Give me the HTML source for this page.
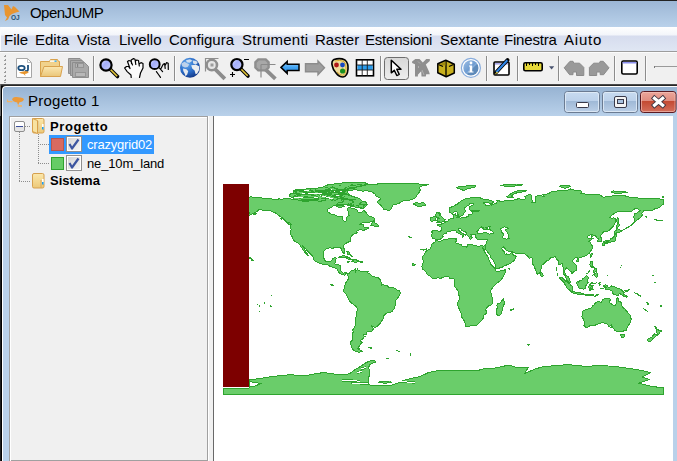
<!DOCTYPE html>
<html><head><meta charset="utf-8">
<style>
*{margin:0;padding:0;box-sizing:border-box}
html,body{width:677px;height:461px;overflow:hidden;background:#f0f0f0;font-family:"Liberation Sans",sans-serif}
.a{position:absolute}
#title{left:0;top:0;width:677px;height:27px;background:linear-gradient(#9bb5d4,#b9d1ea)}
#title .top{left:0;top:0;width:677px;height:1px;background:#232323}
#menubar{left:0;top:27px;width:677px;height:24px;background:linear-gradient(#ffffff 0px,#f3f5fa 8px,#d6dcee 9px,#dfe6f3 23px)}
#menubar span{position:absolute;top:4px;font-size:15px;color:#000;white-space:nowrap;line-height:17px}
#mline{left:0;top:51px;width:677px;height:1px;background:#9c9c9c}
#toolbar{left:0;top:52px;width:677px;height:32px;background:#f0f0f0}
.sep{position:absolute;top:56px;width:2px;height:25px;border-left:1px solid #8c8c8c;border-right:1px solid #fafafa}
#tbline{left:0;top:84px;width:677px;height:1px;background:#4a4a4a}
#frame{left:0;top:86px;width:677px;height:375px;background:#b9d1ea}
.cb{width:16px;height:16px;border:1px solid #8f8f8f;background:linear-gradient(135deg,#d4d4d4,#f6f6f6);box-shadow:inset 0 0 0 1px #fff}
.cb::after{content:"";position:absolute;left:4px;top:2px;width:0;height:0}
</style></head><body>
<div id="title" class="a"><div class="a top"></div>
<span class="a" style="left:30px;top:4px;font-size:15px;line-height:17px;color:#000;letter-spacing:-0.55px">OpenJUMP</span>
</div>
<div id="menubar" class="a">
<span style="left:4px">File</span>
<span style="left:35px">Edita</span>
<span style="left:77px">Vista</span>
<span style="left:119px">Livello</span>
<span style="left:169px">Configura</span>
<span style="left:242px;letter-spacing:0.25px">Strumenti</span>
<span style="left:315px">Raster</span>
<span style="left:365px;letter-spacing:-0.2px">Estensioni</span>
<span style="left:440px">Sextante</span>
<span style="left:504px;letter-spacing:-0.2px">Finestra</span>
<span style="left:564px;letter-spacing:0.8px">Aiuto</span>
</div>
<div id="mline" class="a"></div>
<div id="toolbar" class="a"></div>
<div class="a" style="left:0;top:52px;width:677px;height:1px;background:#fbfbfb"></div>
<div class="a" style="left:0;top:27px;width:1px;height:24px;background:#fafbfd"></div>
<div class="sep" style="left:93px"></div>
<div class="sep" style="left:174px"></div>
<div class="sep" style="left:380px"></div>
<div class="sep" style="left:486px"></div>
<div class="sep" style="left:517px"></div>
<div class="sep" style="left:558px"></div>
<div class="sep" style="left:614px"></div>
<div class="sep" style="left:645px"></div>
<div id="tbline" class="a"></div>
<div class="a" style="left:0;top:84px;width:1px;height:377px;background:#6b6b6b"></div>
<div class="a" style="left:0;top:116px;width:1px;height:345px;background:#1e1e1e"></div>
<div class="a" style="left:1px;top:85px;width:676px;height:376px;background:#000;border-top:1px solid #262626"></div>
<div id="frame" class="a" style="left:2px;top:86px;width:680px;height:380px;background:linear-gradient(#98b4d3 1px,#b9d1ea 29px);border-top:1px solid #fff;border-left:1px solid #fff;border-top-left-radius:4px"></div>
<div class="a" style="left:3px;top:116px;width:674px;height:345px;background:#b9d1ea"></div>
<span class="a" style="left:28px;top:92px;font-size:15px;line-height:17px;color:#000;letter-spacing:0.25px">Progetto 1</span>
<div class="a" style="left:9px;top:116px;width:199px;height:345px;background:#f0f0f0;border:1px solid #a0a0a0"></div>
<div class="a" style="left:10px;top:117px;width:197px;height:350px;border-top:1px solid #fff;border-left:1px solid #fff"></div>
<div class="a" style="left:208px;top:116px;width:5px;height:350px;background:#f0f0f0;border-left:1px solid #fff"></div>
<div class="a" style="left:213px;top:116px;width:1px;height:350px;background:#696969"></div>
<div class="a" style="left:214px;top:116px;width:459px;height:350px;background:#fff"></div>


<!-- MAP -->
<svg class="a" style="left:214px;top:116px" width="459" height="345" viewBox="214 116 459 345">
<g fill="#6acd6a" stroke="#2ea42e" stroke-width="1" stroke-linejoin="round" shape-rendering="crispEdges"><path d="M293.0 200.0L293.0 192.0L300.0 190.0L308.6 188.6L314.8 188.6L326.3 186.4L336.0 184.6L346.7 183.6L355.0 182.8L366.0 182.6L361.0 186.5L354.0 189.8L347.0 190.8L349.0 194.4L360.9 200.4L367.5 204.6L365.0 207.0L362.0 208.5L350.0 206.0L345.0 204.0L330.0 204.0L320.0 202.5L310.0 201.0Z"/><path d="M435.8 240.3L438.1 241.1L440.6 241.2L444.2 239.5L446.7 239.1L450.4 238.9L453.5 239.0L455.5 238.6L456.5 238.9L455.7 239.9L456.5 241.0L455.6 242.2L456.2 243.0L457.1 243.7L458.9 244.0L461.6 244.6L462.0 245.9L464.4 246.5L466.3 247.1L467.5 246.2L467.5 244.8L469.3 244.0L471.2 244.4L473.4 245.1L474.2 245.6L476.1 245.9L479.1 246.2L481.0 245.6L482.6 246.0L484.0 246.1L484.9 245.9L485.8 248.1L485.0 249.9L484.4 250.5L484.2 249.7L482.9 247.6L482.6 248.1L484.0 250.8L485.3 253.0L486.5 254.9L488.1 257.2L488.7 259.9L490.2 262.1L491.0 264.6L492.6 265.8L493.8 267.4L495.2 268.8L496.0 269.6L495.4 270.7L497.5 271.5L499.4 271.1L501.8 270.5L503.6 270.2L505.8 269.7L505.6 271.3L504.9 273.2L503.6 276.2L501.8 278.7L500.0 281.1L497.5 282.6L495.1 284.8L493.2 286.6L492.0 288.5L491.0 290.3L490.8 292.2L491.4 294.0L491.4 296.4L492.6 297.7L492.6 301.3L492.6 303.2L491.4 304.8L488.3 306.0L486.5 308.1L485.6 309.3L486.2 311.1L486.5 313.2L484.6 314.6L483.2 315.8L483.3 317.6L482.7 319.5L481.2 320.7L479.8 322.5L477.7 324.3L476.1 325.4L474.2 325.9L471.8 325.7L469.9 326.1L467.5 326.8L465.7 326.1L465.4 324.9L464.9 322.8L464.1 320.7L463.2 319.1L461.7 317.3L461.3 314.8L460.8 312.1L459.5 309.7L457.7 305.6L457.5 303.6L458.1 301.3L459.5 298.9L459.7 297.1L458.9 295.2L458.1 291.8L457.9 290.3L456.5 288.9L454.6 286.6L454.3 284.8L454.6 283.0L455.0 280.8L454.6 279.3L453.4 278.6L451.6 278.8L449.7 278.2L448.5 276.5L446.7 276.5L444.8 276.7L442.4 277.7L440.6 278.3L438.1 277.8L436.3 278.1L433.8 278.8L432.0 278.1L430.1 276.2L428.3 275.4L427.1 274.0L426.5 272.6L425.0 271.1L424.0 270.1L422.5 268.9L422.1 267.1L421.6 266.2L422.4 265.2L423.0 263.4L423.2 260.9L422.8 259.7L422.2 258.5L423.0 256.0L424.6 254.2L425.2 252.3L426.7 250.5L428.9 249.7L430.8 248.3L431.0 246.8L431.2 245.0L432.6 243.4L434.4 242.7L435.0 241.9L435.8 240.3Z"/><path d="M654.3 219.3L656.1 219.9L661.0 220.5L662.9 221.0L660.4 220.7L654.9 219.8Z"/><path d="M556.6 267.5L556.9 268.9L556.7 270.7L556.2 270.4L556.3 268.5Z"/><path d="M259.9 311.8L260.2 312.0Z"/><path d="M582.2 311.1L582.9 311.1L583.9 310.5L585.7 309.6L587.5 309.1L589.4 308.7L591.2 308.1L592.7 306.4L592.9 305.3L594.3 304.8L594.7 304.0L595.5 302.9L596.7 302.0L598.0 301.2L599.6 301.7L600.3 302.6L601.6 302.5L601.8 301.3L602.6 299.9L603.7 299.1L605.2 298.3L606.3 298.8L607.6 298.9L609.4 298.9L610.6 299.1L610.0 300.5L609.2 301.7L609.0 302.5L610.3 303.3L611.9 304.3L613.3 305.3L614.3 305.8L615.2 305.6L616.3 303.8L616.5 302.0L616.5 300.1L616.8 298.9L617.6 297.3L618.2 298.4L618.5 300.7L619.0 301.7L620.1 301.7L621.1 302.6L621.2 304.2L622.1 306.0L622.3 307.5L623.7 308.1L625.3 309.2L626.1 310.8L627.4 311.6L627.9 312.6L628.8 313.6L629.8 314.6L630.5 315.7L630.5 317.0L631.2 319.1L630.8 321.6L630.2 322.9L629.6 324.0L628.5 325.2L627.9 326.5L627.0 327.7L626.8 329.3L626.6 330.1L624.7 330.5L623.4 331.0L622.2 332.0L621.2 331.4L620.1 331.1L618.8 331.7L617.2 331.2L615.7 330.9L614.3 329.9L613.9 328.9L612.7 327.8L612.2 326.5L611.7 327.2L610.6 327.4L611.2 326.5L611.8 324.6L611.4 325.0L610.1 326.0L609.2 326.8L608.5 326.3L607.9 324.9L607.1 324.4L606.5 323.6L605.3 323.4L603.7 322.8L601.0 323.0L598.6 323.8L596.4 324.3L594.9 325.4L594.3 325.7L592.5 325.9L590.0 325.7L589.4 326.3L587.9 327.1L586.9 327.2L585.8 327.1L584.6 326.2L583.9 326.1L584.0 325.2L584.7 324.9L584.7 323.4L584.2 322.2L583.9 320.9L583.8 319.7L582.9 318.5L582.4 317.3L581.7 316.3L582.3 315.4L582.0 314.3L582.4 313.0Z"/><path d="M325.4 185.6L327.9 184.7L332.8 184.4L337.6 185.3L334.6 186.6L331.5 187.7L329.1 187.4L326.6 186.7Z"/><path d="M408.1 236.8L409.9 236.9L412.1 237.9L409.3 237.2Z"/><path d="M363.4 208.2L359.7 207.6L356.0 207.3L351.7 205.4L348.1 204.8L353.0 202.7L353.6 201.3L349.9 200.3L346.2 198.7L342.6 198.7L338.3 198.4L335.2 197.0L333.4 196.0L335.2 194.2L340.1 193.8L345.0 194.0L349.3 195.3L353.0 196.6L357.2 197.7L360.3 199.1L361.5 200.9L365.8 202.1L367.3 203.0L365.2 204.3L363.4 204.8L364.0 206.4L363.4 208.2Z"/><path d="M346.8 251.4L348.7 251.7L350.5 254.8L352.4 256.6L349.9 255.0L347.4 254.2Z"/><path d="M289.3 196.0L291.1 197.2L294.2 196.9L297.2 196.2L299.1 195.0L300.9 194.2L297.2 193.2L290.5 193.2L289.9 194.8Z"/><path d="M315.6 190.9L320.5 190.5L323.6 191.1L323.6 192.3L319.3 192.3L316.2 191.7Z"/><path d="M576.5 282.4L577.1 284.6L578.0 286.3L578.4 287.6L580.2 288.4L582.6 288.4L583.4 289.2L585.1 288.7L585.7 287.3L585.7 285.8L586.9 284.8L587.3 283.0L588.5 282.6L587.5 281.4L587.3 279.8L588.2 278.7L589.0 277.8L587.3 276.2L586.3 275.6L585.1 276.8L584.2 278.0L582.9 278.7L582.0 279.9L580.2 280.6L579.2 281.3L578.4 282.1L577.3 281.8Z"/><path d="M420.9 249.3L424.0 249.5L426.5 248.8L426.3 249.8L423.4 250.1Z"/><path d="M412.0 263.3L413.6 263.9L415.2 264.4L414.2 265.9L413.0 265.8Z"/><path d="M646.0 216.5L647.2 217.1L646.7 217.3Z"/><path d="M247.0 310.0L247.5 310.3Z"/><path d="M338.9 257.4L340.7 256.1L342.6 255.9L345.0 255.9L347.4 257.0L349.9 258.2L352.1 259.5L348.7 259.8L347.7 259.0L346.5 257.9L343.2 257.0L341.9 257.2L340.1 257.5Z"/><path d="M324.8 190.5L329.1 190.1L334.0 190.5L339.5 190.7L344.4 190.9L344.6 192.7L338.9 192.9L332.8 192.8L329.7 192.3L326.0 191.6Z"/><path d="M332.1 186.8L335.2 188.4L340.1 190.1L345.0 190.7L347.4 189.6L351.1 188.4L354.8 187.7L357.2 186.4L362.1 185.7L365.8 184.6L367.7 183.6L364.6 182.8L357.2 182.5L349.9 182.5L342.6 182.9L335.2 183.8L330.3 184.6L326.6 185.2L324.2 186.2L325.4 187.4L329.1 188.3Z"/><path d="M436.1 240.1L435.3 239.1L433.8 238.6L432.1 238.9L432.2 237.4L431.4 236.7L432.0 234.6L432.2 233.0L431.6 231.5L433.2 230.7L435.6 230.8L438.1 231.0L440.8 231.0L441.4 229.7L441.5 227.8L440.3 226.5L437.6 225.5L437.4 224.7L439.3 224.4L441.0 224.5L441.4 223.3L443.0 223.7L444.8 222.7L446.1 221.6L447.7 221.2L448.5 219.9L449.1 219.2L451.6 218.7L453.5 218.2L453.5 216.2L452.9 214.6L455.2 213.8L456.0 213.5L455.6 215.2L458.2 216.2L456.5 217.9L458.9 217.6L460.8 218.2L463.2 217.4L465.7 217.1L467.4 216.9L468.7 216.5L468.8 215.0L469.3 214.0L471.8 214.4L472.9 213.4L472.4 212.4L471.7 211.7L474.9 211.3L477.3 211.2L479.8 210.8L477.9 210.1L475.5 210.2L471.2 210.8L469.2 209.7L469.1 207.9L469.5 206.8L471.8 205.6L474.0 204.6L473.9 203.8L472.2 203.5L469.9 203.8L469.1 204.8L467.3 206.0L465.7 207.0L464.4 208.0L464.2 209.5L466.0 210.8L465.1 211.9L463.5 213.4L463.2 215.0L462.4 215.5L460.8 216.0L458.9 216.3L458.4 215.2L457.5 213.5L456.8 211.9L455.9 211.3L454.4 211.9L452.8 213.0L451.0 213.0L449.7 212.2L449.1 210.5L449.1 208.9L449.5 207.6L451.6 207.0L453.4 206.3L455.2 205.2L457.7 204.0L459.2 202.5L460.8 201.3L462.0 200.3L463.8 199.7L465.7 198.7L467.5 198.4L469.9 198.1L471.8 197.5L474.2 197.1L477.3 197.2L479.8 197.8L481.2 198.2L483.4 199.1L486.5 199.4L489.6 200.3L492.6 201.1L493.5 202.1L492.4 203.1L490.2 203.3L487.1 202.7L484.4 202.4L483.2 203.0L485.3 204.3L485.6 205.2L487.7 205.9L488.9 205.3L490.2 204.8L492.0 205.1L493.8 204.0L496.7 203.2L497.1 201.5L496.4 200.3L499.4 200.5L500.0 201.5L501.8 201.4L504.2 200.9L507.9 200.3L509.8 200.5L512.2 200.3L514.7 199.8L516.5 199.7L517.7 198.7L521.4 199.2L524.5 199.4L525.7 197.8L524.8 196.6L526.9 195.4L528.1 194.9L531.2 194.9L532.1 195.8L531.2 197.2L531.6 198.4L532.2 200.3L532.4 201.8L531.6 203.0L535.9 202.7L535.6 200.9L535.9 199.1L535.4 197.2L536.7 196.2L537.9 195.5L541.6 195.8L544.1 196.6L542.5 194.4L545.9 194.2L549.0 193.8L549.3 192.6L550.8 192.0L554.5 191.3L558.1 190.9L561.8 190.7L564.3 190.7L567.3 190.1L570.6 189.0L572.9 189.5L574.7 190.4L579.0 190.5L582.0 191.3L581.4 193.5L580.2 193.9L583.9 193.9L588.2 194.3L593.7 194.8L597.4 194.3L600.4 195.0L601.6 196.2L604.1 197.5L605.9 196.6L609.6 196.6L613.9 195.5L617.0 195.1L620.6 195.5L625.5 196.0L629.2 197.2L632.9 197.2L637.8 197.5L639.0 198.8L642.7 198.8L647.6 198.9L651.2 198.3L654.3 198.7L658.6 198.6L661.7 199.3L663.5 199.8L663.5 204.3L661.7 205.1L659.8 207.6L655.5 208.5L652.5 210.1L648.8 210.3L646.4 210.9L643.9 210.8L642.7 212.2L641.5 213.4L642.4 215.0L641.2 216.8L639.0 218.7L637.2 219.9L634.8 221.7L634.1 219.3L633.9 216.2L634.7 213.8L637.2 213.1L639.0 211.3L640.8 210.3L639.0 210.1L637.8 208.5L634.7 208.9L631.6 211.3L628.6 211.7L624.9 211.6L621.2 211.4L618.2 211.7L615.7 212.5L613.3 214.1L610.8 216.2L609.6 217.4L611.4 218.2L613.9 217.8L616.1 219.2L615.1 221.5L614.9 224.2L613.3 226.0L612.0 227.6L610.2 229.3L608.4 230.9L605.9 231.8L603.8 231.8L603.0 232.4L601.9 234.1L600.2 236.2L601.5 238.3L601.6 240.1L601.3 241.1L599.2 241.7L597.8 241.9L598.0 240.1L598.3 238.9L596.9 237.9L596.2 236.8L595.6 235.6L593.4 235.8L591.8 236.5L591.6 235.4L592.7 234.6L591.2 234.2L589.4 235.3L587.5 236.2L587.2 237.0L588.5 238.3L589.4 238.8L591.0 237.9L593.1 238.4L591.5 239.4L590.0 240.6L589.0 241.6L590.2 242.3L591.1 244.4L592.2 245.5L592.2 246.5L592.3 248.3L591.6 249.8L590.2 251.6L589.4 253.2L587.9 254.2L586.1 255.7L583.9 256.4L582.2 256.9L580.2 257.6L578.4 258.2L578.0 259.1L577.4 257.9L575.9 257.6L574.3 258.4L573.5 259.3L572.6 260.9L573.6 262.8L575.1 264.4L576.3 265.5L576.9 267.7L576.8 270.0L575.8 270.7L574.1 271.5L573.5 272.4L571.6 273.7L571.4 272.3L571.7 271.3L570.8 271.2L569.5 270.8L568.7 269.3L567.6 268.6L566.6 268.6L566.1 267.7L565.4 268.3L564.5 271.3L565.1 272.9L566.0 274.9L566.7 275.9L568.1 276.6L569.5 278.3L569.8 280.5L570.6 282.2L569.8 282.6L568.6 281.9L567.1 280.8L566.2 278.7L565.9 277.5L565.7 276.1L564.9 275.3L563.7 274.4L563.4 272.6L563.9 270.5L563.7 268.3L562.8 266.4L562.6 264.0L561.6 263.5L559.7 264.8L558.5 264.2L558.8 262.1L557.9 260.4L556.7 259.2L555.9 257.9L555.5 256.5L553.9 256.9L552.4 257.5L551.0 257.6L549.5 258.6L549.0 259.9L547.1 260.6L545.0 262.4L543.8 263.6L542.5 264.8L541.2 265.7L541.4 267.7L540.9 269.7L540.8 271.6L539.8 272.8L538.9 273.5L537.9 274.3L536.8 273.3L536.2 271.3L535.5 269.5L534.6 267.7L534.0 266.1L533.0 264.6L532.5 262.8L532.2 260.8L532.1 258.5L531.8 257.2L529.4 258.5L527.8 257.1L528.1 256.3L526.9 255.7L525.7 254.9L524.7 253.2L522.6 253.2L519.0 253.3L515.9 253.1L513.4 252.6L512.8 251.1L512.0 250.9L509.8 251.5L507.9 251.1L506.1 250.0L505.2 248.8L504.5 247.4L503.0 246.8L502.4 247.6L501.8 248.3L502.4 249.9L503.6 251.1L504.5 252.3L505.0 253.8L505.7 254.4L506.2 253.2L506.2 254.6L507.9 254.8L509.8 254.4L511.0 253.0L512.0 252.0L512.1 253.8L513.4 255.0L515.0 255.4L516.3 256.6L515.6 258.1L514.7 259.2L513.8 260.9L512.6 261.3L511.6 262.3L510.4 263.4L507.1 264.8L504.2 265.8L502.4 267.1L500.0 267.8L498.4 268.4L496.3 268.6L495.9 267.7L495.4 265.8L495.3 264.2L494.4 262.8L493.5 260.7L492.4 259.3L491.0 257.9L490.4 255.4L489.3 254.4L488.6 253.5L487.7 252.1L486.5 250.4L485.4 249.7L485.8 248.1L485.4 245.9L485.9 244.4L486.6 242.5L487.0 241.0L487.1 239.2L485.9 239.4L484.6 239.9L483.2 240.0L481.0 239.2L479.1 239.9L477.3 239.2L476.4 238.9L476.3 237.4L475.6 237.0L475.8 235.8L475.1 234.8L474.9 234.3L473.9 234.1L472.2 234.2L470.9 234.6L471.7 235.3L470.7 236.1L471.4 236.9L472.4 237.4L471.1 237.8L471.2 238.8L470.6 239.6L469.8 239.1L469.0 238.3L469.1 237.3L468.4 236.4L467.7 235.6L466.8 234.7L466.9 233.1L465.7 232.1L464.4 231.5L462.6 230.9L461.7 230.1L461.0 229.0L459.8 228.2L458.1 228.7L458.3 229.7L459.5 230.8L460.3 232.1L461.6 232.9L462.6 233.5L464.1 234.1L465.7 235.1L464.9 234.8L463.7 234.7L463.2 235.7L463.8 236.4L462.6 237.6L462.2 237.3L462.7 235.8L462.0 235.1L461.4 234.7L460.1 234.2L458.8 233.6L457.7 232.9L456.5 231.9L455.9 230.9L454.6 230.1L452.8 230.4L451.6 230.8L450.4 231.4L448.6 231.0L447.3 231.2L446.8 232.5L446.1 233.4L444.2 234.0L443.0 235.3L442.6 236.1L443.2 236.8L442.3 237.6L442.0 238.1L441.0 238.6L440.4 239.2L437.5 239.2L436.1 240.1Z"/><path d="M367.9 347.0L371.9 347.0L371.3 348.1L368.9 347.9Z"/><path d="M660.2 305.6L661.7 305.4L661.4 306.5L660.4 306.5Z"/><path d="M500.6 185.7L504.2 184.7L510.4 184.2L516.5 184.0L522.6 184.7L519.0 185.8L512.8 186.1L506.7 186.2Z"/><path d="M330.8 284.2L332.8 284.6L333.4 285.4L331.0 285.4Z"/><path d="M353.6 188.4L357.2 186.8L362.1 186.0L367.1 184.7L374.4 184.1L384.2 183.8L394.0 183.3L406.2 183.1L416.1 183.8L428.3 184.6L422.2 186.0L419.1 187.4L420.3 189.9L419.1 192.3L417.3 194.8L416.1 197.2L413.6 198.7L408.7 200.4L403.8 200.7L400.1 202.7L397.1 204.0L393.4 204.8L392.2 206.4L390.9 208.9L389.3 210.8L386.6 209.8L384.2 209.5L382.4 207.6L381.1 205.8L379.3 204.0L377.5 202.4L378.1 200.5L380.5 199.7L379.9 198.1L378.1 197.2L376.2 196.0L375.0 194.2L373.2 192.6L371.3 191.5L367.1 190.9L362.1 191.1L358.5 190.4L355.4 189.6L353.6 188.4Z"/><path d="M620.1 267.5L620.5 267.9L620.3 268.0Z"/><path d="M280.1 218.0L281.7 218.3L281.9 220.1L281.3 219.5Z"/><path d="M576.2 260.6L577.4 259.7L579.0 259.9L578.4 261.4L577.1 261.9Z"/><path d="M599.2 282.0L600.4 282.4L599.8 283.6L600.8 284.8L599.6 285.2L598.9 283.5Z"/><path d="M247.2 257.0L250.1 257.7L252.1 259.3L253.4 260.3L252.0 261.0L251.3 259.0L249.1 258.1Z"/><path d="M351.7 261.7L353.6 259.8L356.0 259.8L359.2 261.4L357.5 261.8L355.4 262.5L353.8 261.9Z"/><path d="M614.5 233.4L616.0 233.0L617.6 232.4L618.8 232.8L621.4 231.2L620.0 230.2L617.6 228.7L616.6 228.7L616.3 230.7L614.9 231.2L614.4 232.3Z"/><path d="M614.5 234.6L616.3 233.7L616.8 235.8L615.7 237.3L615.6 239.0L615.4 240.5L614.3 241.3L613.0 241.7L611.1 241.8L609.8 242.8L608.6 242.7L608.9 241.8L607.4 241.7L605.4 242.3L603.5 242.7L603.4 242.1L605.4 240.7L607.8 240.6L609.6 240.2L610.6 238.9L611.2 239.1L612.8 237.9L614.0 236.7L614.5 235.4Z"/><path d="M413.6 204.0L415.4 202.9L420.3 203.1L423.4 202.7L425.2 204.0L426.1 204.8L424.6 205.4L420.3 206.5L417.3 206.0L415.2 205.9L416.1 205.1Z"/><path d="M435.6 220.3L435.5 218.7L436.3 217.4L435.0 216.6L433.8 216.5L432.6 217.3L430.8 217.8L431.0 219.0L430.3 220.4L431.0 221.1L433.2 221.0L434.4 220.4Z"/><path d="M347.1 261.8L349.5 261.9L348.8 262.4L347.7 262.1Z"/><path d="M571.9 292.5L572.9 291.6L574.7 291.6L576.0 292.4L578.4 292.7L579.6 292.3L580.9 292.7L581.2 293.5L583.1 293.6L583.3 294.9L580.8 294.5L578.4 294.2L575.9 293.8L573.5 293.3L572.2 292.8Z"/><path d="M527.3 344.0L529.4 344.2L528.5 345.1L527.3 344.8Z"/><path d="M654.7 282.0L655.3 282.6L654.8 282.7Z"/><path d="M253.4 214.0L256.4 213.6L255.0 214.6Z"/><path d="M621.2 230.8L623.7 229.6L626.8 227.8L629.8 226.0L632.3 224.2L634.7 222.0L634.3 222.6L631.6 224.9L628.6 226.9L625.5 228.8L622.5 230.4Z"/><path d="M602.0 243.4L603.4 242.7L604.6 243.5L604.0 245.7L602.9 246.2L602.4 244.6Z"/><path d="M590.6 261.5L592.7 261.5L592.8 263.4L592.0 264.8L593.1 266.8L594.9 268.3L593.9 268.0L592.0 267.2L590.7 266.6L590.1 265.2L589.8 264.2L590.5 263.4Z"/><path d="M503.4 298.9L504.5 302.0L504.9 303.2L504.0 304.4L503.4 306.2L502.4 309.3L501.6 312.1L500.7 314.7L498.5 315.6L496.9 314.6L496.2 311.8L496.7 309.7L497.3 307.5L496.9 305.0L497.5 304.0L499.7 303.4L501.2 301.7L501.8 300.7L502.8 299.3Z"/><path d="M621.5 265.6L621.6 265.8L621.4 265.8Z"/><path d="M270.9 294.9L271.9 295.2L271.3 295.6Z"/><path d="M652.5 275.4L653.1 275.6L652.6 275.7Z"/><path d="M510.6 309.9L511.4 309.9L513.7 308.7L513.4 309.3L511.0 310.3Z"/><path d="M299.1 191.3L302.7 192.0L307.0 192.0L313.1 192.1L313.8 191.3L312.5 190.5L308.2 190.4L304.6 190.7L300.3 190.6Z"/><path d="M607.8 275.0L608.0 275.4L607.6 275.3Z"/><path d="M592.5 275.6L593.7 274.0L595.5 273.7L596.7 272.4L598.0 274.4L597.6 276.2L596.6 277.2L595.1 276.5L594.5 274.9L593.2 274.9Z"/><path d="M242.7 217.1L248.2 215.8L251.9 214.0L255.0 212.4L257.0 211.7L259.2 209.5L262.3 210.1L266.6 210.7L270.3 210.9L273.9 212.2L276.4 213.4L278.9 215.6L281.9 217.4L283.8 219.3L286.2 221.7L289.3 223.6L290.5 225.2L291.1 229.1L290.5 232.1L290.9 234.6L292.3 237.0L292.9 238.5L294.2 240.7L295.3 241.9L297.8 242.5L299.4 244.3L300.9 246.8L302.7 249.3L304.0 251.1L305.8 253.8L308.2 256.1L307.6 254.2L305.8 251.7L304.6 248.9L302.4 245.6L304.8 247.4L307.0 250.5L309.5 253.0L312.5 256.0L314.0 258.5L313.8 259.9L316.2 261.8L319.3 263.0L322.3 264.2L325.4 265.0L327.2 264.4L329.7 266.1L332.8 267.4L335.8 268.3L337.6 269.7L338.0 271.3L338.5 272.2L340.7 273.9L343.2 274.8L344.8 275.3L345.6 273.4L347.2 274.0L348.2 275.0L348.3 273.7L347.7 273.3L345.6 272.4L343.2 273.4L341.0 271.3L340.6 268.9L341.0 265.8L338.3 264.7L335.2 264.8L334.8 263.4L335.6 260.9L336.4 258.0L334.6 257.9L332.4 258.5L332.0 260.3L330.5 261.5L327.9 261.9L325.6 261.2L324.4 259.7L323.6 257.2L323.3 254.2L323.8 251.1L325.4 249.3L327.2 248.1L330.3 247.9L332.8 248.4L333.7 248.3L334.0 247.0L337.0 247.0L338.9 247.8L340.1 247.4L341.3 248.7L341.8 250.5L342.8 252.3L343.8 253.3L344.6 253.0L345.0 251.4L344.4 249.3L343.5 247.4L343.4 245.9L344.8 244.4L346.8 242.8L348.9 241.8L350.4 241.0L349.9 238.9L350.8 237.3L351.7 235.8L352.6 234.5L355.4 233.6L357.2 233.0L356.5 231.5L358.5 230.3L360.9 229.4L362.8 230.8L365.2 229.7L368.3 228.7L368.9 227.1L365.8 227.8L364.0 226.9L363.9 224.8L361.5 224.1L359.1 224.4L360.3 223.6L363.4 222.7L368.3 222.7L371.9 221.5L373.8 220.3L374.4 218.5L372.4 217.1L369.5 216.2L367.7 214.6L366.4 213.1L364.6 211.3L363.6 210.3L362.1 212.2L359.7 212.5L357.9 211.9L357.2 210.1L355.4 209.2L353.0 208.2L348.1 207.6L347.4 208.9L348.1 211.3L348.3 213.8L349.2 215.2L346.2 217.4L346.5 219.9L345.6 221.4L344.0 221.1L342.2 219.4L342.2 216.6L338.3 216.5L334.6 215.0L330.9 214.1L329.1 212.5L327.1 211.3L327.2 209.7L328.5 208.5L331.5 207.3L332.8 206.0L335.8 205.2L337.0 204.0L338.3 202.7L340.1 202.7L341.7 203.0L343.2 201.5L343.2 199.9L340.7 198.8L337.6 198.9L335.2 200.3L333.0 199.7L331.5 200.5L329.7 198.9L327.9 198.6L327.1 196.2L325.4 196.7L324.8 198.3L325.6 200.3L323.6 200.5L321.1 201.1L318.1 201.1L315.6 200.5L311.9 199.9L309.5 200.9L305.8 201.3L302.1 201.1L299.7 200.5L296.0 199.3L292.3 199.2L289.9 198.8L286.8 198.1L284.4 198.7L281.9 199.2L278.9 198.9L275.8 199.8L272.7 199.1L270.3 198.8L266.6 198.3L262.9 198.1L259.2 197.8L256.2 197.2L253.7 197.1L250.9 196.9L248.2 197.5L245.2 198.1L243.3 198.4L241.5 199.3L239.4 199.8L241.5 201.1L243.3 202.0L241.7 202.7L239.0 203.1L237.2 203.8L239.0 205.1L241.5 205.2L245.2 205.2L246.0 206.2L243.9 206.4L241.1 207.3L240.3 208.9L241.5 210.1L243.9 210.9L244.8 212.3L248.8 212.2L250.1 213.1L248.8 214.4L245.8 215.6L242.7 217.1Z"/><path d="M624.7 290.9L626.1 291.8L628.6 290.9L629.4 289.5L628.0 290.3L626.5 290.9Z"/><path d="M643.8 308.7L645.7 309.9L647.6 311.5L647.0 311.1L644.3 309.3Z"/><path d="M370.4 225.9L371.3 224.2L372.6 222.3L374.4 221.0L375.0 221.4L374.4 222.9L376.2 223.4L377.8 224.8L378.4 226.0L377.8 227.0L376.6 226.7L375.0 226.6L373.8 225.9L371.9 225.9Z"/><path d="M603.5 285.8L605.3 284.7L607.1 285.3L609.0 288.2L611.4 286.0L613.0 286.4L615.7 287.4L618.2 288.4L620.0 288.9L621.6 290.2L623.7 291.8L624.1 292.8L623.0 293.3L624.3 294.6L625.9 295.6L627.9 296.8L626.5 297.2L624.3 296.7L622.1 295.0L619.9 293.5L618.8 294.4L618.2 295.5L616.3 295.3L614.7 294.2L613.3 294.1L612.7 293.1L612.3 291.4L610.8 290.3L608.7 289.6L606.5 289.1L605.7 289.2L604.7 287.8L606.5 287.3L605.1 286.6L603.8 286.2Z"/><path d="M610.8 192.1L613.3 190.9L616.3 191.3L621.9 191.7L627.4 192.1L623.1 192.8L617.0 193.8L613.3 192.9Z"/><path d="M557.5 273.2L558.0 275.4L557.7 275.5L557.3 273.8Z"/><path d="M234.7 307.5L235.1 307.7Z"/><path d="M506.7 196.9L508.5 195.4L510.4 194.2L512.2 192.9L514.7 191.7L518.3 190.7L522.6 190.5L526.9 190.0L524.5 191.7L519.0 192.3L514.7 193.5L512.8 194.8L511.6 196.0L513.4 197.5L510.4 197.8L507.9 197.5Z"/><path d="M654.6 326.3L655.9 327.3L656.9 328.7L658.0 329.5L658.5 330.1L659.8 330.6L661.7 330.4L661.4 331.5L660.1 332.1L659.7 332.8L658.8 334.1L657.7 335.2L657.1 334.8L657.4 333.3L656.4 332.7L655.9 332.2L656.9 331.4L657.0 329.9L656.4 328.9L655.0 327.3Z"/><path d="M654.6 333.8L655.5 334.3L656.5 334.8L656.1 335.9L655.2 336.9L654.7 337.7L652.8 338.5L652.2 339.9L651.0 341.0L649.4 341.3L647.1 340.7L647.3 339.7L648.6 338.5L649.8 338.0L651.9 336.9L652.8 335.6L653.7 334.9Z"/><path d="M259.5 305.6L260.2 306.0L259.7 306.1Z"/><path d="M586.6 273.9L588.2 272.6L589.5 270.5L589.0 271.7L587.3 273.7Z"/><path d="M293.5 190.5L296.0 190.9L299.7 189.9L301.5 189.3L299.7 189.4L294.8 190.0Z"/><path d="M318.7 194.8L321.1 196.2L322.9 196.7L324.4 196.0L324.8 194.8L322.9 193.5L320.5 193.8L317.4 194.4Z"/><path d="M360.7 261.7L362.6 261.8L362.4 262.1L360.8 262.1Z"/><path d="M617.6 217.7L618.5 219.3L618.2 221.7L618.8 223.8L620.0 224.4L618.4 226.6L617.6 227.8L616.8 227.2L617.0 225.4L617.1 222.9L616.6 220.5L617.2 218.7Z"/><path d="M348.2 273.5L349.3 273.7L349.9 272.6L350.5 271.3L351.4 270.6L353.0 270.4L354.4 269.6L355.4 269.0L355.8 269.7L355.0 270.7L355.3 271.6L355.9 272.2L355.7 271.0L357.0 270.1L357.5 269.0L358.2 270.1L359.3 270.8L360.9 271.2L362.8 271.7L364.2 271.3L365.8 271.1L367.3 271.1L366.2 271.8L367.7 272.2L368.6 273.7L369.7 274.0L371.0 275.0L371.6 275.9L372.8 276.8L374.6 277.0L376.9 277.2L378.3 277.7L379.8 279.1L380.5 280.3L381.0 281.9L381.8 283.0L382.0 284.2L381.3 285.2L383.6 284.8L384.8 285.1L386.6 285.4L388.1 286.4L388.7 287.3L390.9 287.6L392.8 287.8L394.6 288.1L395.8 288.7L397.3 290.0L398.9 290.4L399.9 290.9L400.2 292.8L399.9 295.2L399.1 296.2L397.7 297.7L396.7 299.5L395.3 300.4L395.2 302.3L395.2 305.6L394.5 306.7L394.2 308.5L393.0 310.2L391.9 311.5L390.3 312.3L388.4 312.5L386.0 313.6L384.4 314.8L383.5 316.4L383.5 318.5L382.4 319.7L381.4 321.6L380.3 323.2L378.7 325.0L377.5 326.1L375.9 327.0L374.2 327.0L372.6 326.3L371.5 325.7L371.3 326.6L372.9 327.7L373.2 329.2L372.3 330.8L370.1 331.6L367.1 331.9L366.7 333.0L366.8 334.1L365.2 334.7L363.4 334.4L363.4 335.6L364.6 336.1L365.1 336.6L364.0 336.9L363.0 338.8L361.8 339.3L360.3 340.9L361.5 342.1L362.4 342.8L360.3 344.2L359.5 345.7L358.5 347.0L359.2 348.3L357.9 348.6L359.0 349.5L360.3 350.4L363.0 351.3L361.5 351.7L359.1 352.2L357.2 351.9L354.8 351.0L352.4 349.1L351.7 346.7L350.5 344.2L350.8 341.8L352.1 340.3L353.0 338.7L352.6 337.1L353.0 335.6L352.6 333.8L353.2 332.0L352.8 329.9L354.2 327.7L355.2 325.2L355.4 322.8L355.5 320.3L355.8 317.9L356.5 315.4L356.8 313.0L357.1 310.4L357.0 308.1L356.5 306.6L354.8 305.4L352.4 303.6L349.9 301.6L349.3 300.4L348.1 298.5L346.8 295.8L345.6 293.4L344.4 292.2L343.4 290.9L343.8 289.5L344.8 288.5L344.0 287.3L344.0 286.0L345.0 284.8L345.0 283.2L346.2 282.2L346.8 281.1L347.9 279.9L348.2 278.7L348.1 276.6L347.6 275.4Z"/><path d="M231.7 300.7L232.9 301.3L231.7 301.2Z"/><path d="M599.8 288.1L602.9 288.1L603.2 288.9L600.4 288.6Z"/><path d="M559.4 186.4L563.0 185.0L566.7 185.0L571.0 186.4L565.5 188.3L561.8 187.4Z"/><path d="M396.4 350.4L399.1 351.3L398.3 351.0Z"/><path d="M605.3 243.7L606.3 242.3L608.0 242.3L607.5 243.4L605.9 244.0Z"/><path d="M257.0 304.4L258.0 304.8L257.4 305.0Z"/><path d="M508.3 268.6L509.8 268.6L509.4 269.1L508.5 269.0Z"/><path d="M634.7 292.8L637.2 293.8L639.0 295.8L640.8 296.2L638.4 294.4L635.9 293.4Z"/><path d="M326.0 193.5L329.1 193.4L332.1 193.9L330.9 195.1L329.1 195.9L327.2 195.4Z"/><path d="M386.0 358.3L388.5 358.7L387.3 358.4Z"/><path d="M337.0 205.4L340.1 205.2L343.2 205.8L344.4 206.4L341.3 207.3L338.3 207.0L336.4 206.0Z"/><path d="M540.8 272.2L541.6 272.6L542.6 273.8L543.2 275.6L542.6 276.6L541.4 276.8L540.8 275.0Z"/><path d="M410.3 353.4L410.8 355.7L410.5 354.6Z"/><path d="M589.4 290.9L589.3 288.5L588.5 287.6L589.0 285.9L589.8 284.2L590.4 283.1L591.8 282.9L593.7 283.1L595.3 283.6L596.4 282.4L595.5 283.8L594.0 284.0L592.3 283.7L590.6 283.6L590.1 284.8L591.0 285.8L592.0 285.4L593.9 285.3L593.2 286.0L591.8 286.6L592.8 287.9L593.3 289.8L592.2 290.0L591.2 288.6L590.6 287.6L590.5 290.9Z"/><path d="M559.7 277.3L562.4 277.8L563.7 279.3L565.5 281.1L566.7 282.0L568.6 283.0L570.0 284.2L571.0 285.4L572.6 286.6L572.9 288.1L572.6 291.3L571.1 291.4L569.8 290.3L568.3 289.1L566.7 287.4L565.9 285.7L564.9 284.2L563.9 282.2L562.4 281.1L561.2 279.8L560.0 278.6Z"/><path d="M584.1 294.1L585.7 294.2L588.8 294.4L591.2 294.5L593.7 294.4L593.4 295.1L591.2 295.1L588.8 295.0L586.3 295.2L584.5 295.0Z"/><path d="M456.5 187.7L459.5 186.2L463.8 186.3L469.9 185.6L476.1 186.0L474.9 187.1L469.9 188.3L466.3 189.3L463.8 190.4L460.8 189.5L458.9 188.6Z"/><path d="M590.2 256.5L590.1 255.3L591.2 253.5L592.3 253.6L591.8 255.4L591.0 257.4Z"/><path d="M620.3 334.1L622.5 334.5L624.7 334.3L624.5 335.9L624.2 337.0L623.0 337.6L621.9 337.5L621.0 336.1Z"/><path d="M594.3 296.8L595.5 295.5L597.4 294.6L598.9 294.5L596.7 295.6L595.1 296.7Z"/><path d="M228.3 310.0L228.6 310.3Z"/><path d="M367.2 271.0L368.4 271.0L368.3 271.8L367.2 271.8Z"/><path d="M264.1 302.3L265.1 302.9L264.4 303.2Z"/><path d="M270.3 305.6L271.3 306.2L270.5 306.5Z"/><path d="M436.0 222.8L438.7 222.6L441.8 222.0L444.7 221.4L445.1 219.6L443.4 218.8L442.8 217.7L441.2 216.5L440.6 215.6L439.3 215.2L440.8 213.8L438.7 213.5L439.1 212.4L436.9 212.4L436.3 213.8L435.6 215.0L436.3 216.2L437.1 217.1L438.7 217.4L439.3 218.3L439.1 218.9L437.4 218.9L438.1 219.9L436.6 220.7L438.1 221.0L439.3 221.2L437.7 221.5Z"/><path d="M285.8 222.0L289.3 222.6L291.7 224.8L289.3 224.4L286.8 222.9Z"/><path d="M647.0 302.6L647.9 303.2L649.2 305.0L647.9 304.2Z"/><path d="M297.2 196.6L298.7 197.8L299.7 198.7L303.4 199.6L308.2 199.9L313.1 199.9L318.4 199.3L318.7 198.1L317.4 196.6L315.0 195.4L313.1 194.5L309.5 194.8L304.6 194.5L302.7 194.4L299.1 195.4Z"/><path d="M593.1 271.3L593.7 270.1L595.1 268.9L596.7 268.9L597.0 270.7L595.5 271.9L593.9 272.8L592.9 272.2Z"/><path d="M661.7 197.0L663.5 196.5L663.5 197.3Z"/><path d="M223.0 388.0L249.0 388.0L249.0 380.0L259.8 378.5L271.6 376.5L281.9 375.5L289.3 374.8L307.0 375.5L317.4 373.3L324.8 372.6L333.6 374.0L345.0 374.8L350.0 373.5L353.0 371.0L357.0 368.5L361.0 366.0L366.0 362.6L370.0 361.0L374.0 360.0L376.0 361.8L372.0 363.5L369.5 365.0L368.5 368.0L370.0 371.5L369.5 375.0L368.5 378.0L369.0 384.5L372.0 386.0L380.0 385.8L392.5 385.0L399.0 382.5L404.5 380.2L415.0 377.5L420.0 376.6L428.6 372.5L440.0 370.3L452.7 370.1L479.3 370.1L484.6 368.4L493.5 368.4L505.9 365.7L511.2 365.7L514.8 367.0L528.1 367.5L524.5 373.7L534.3 369.3L543.2 366.6L555.0 365.7L567.7 364.6L585.5 366.3L603.2 365.5L620.9 367.2L638.7 369.9L651.0 372.6L642.2 377.0L649.3 379.6L638.7 383.2L652.8 386.7L663.5 387.6L663.5 394.5L223.0 394.5Z"/></g>
<path d="M500.6 229.1L501.2 228.3L503.0 227.2L504.9 226.9L507.3 227.5L508.2 228.7L505.8 229.6L505.5 230.9L507.4 232.1L507.7 233.7L508.2 234.6L509.1 235.8L508.5 237.0L509.1 238.5L506.7 239.2L504.2 238.4L503.0 237.9L502.8 236.7L503.6 234.8L503.6 234.0L502.4 232.9L501.2 231.5L501.2 230.1ZM477.5 233.4L477.3 232.8L476.9 231.8L477.9 230.9L478.2 229.7L479.4 228.8L480.4 227.6L481.6 227.0L482.8 227.6L484.0 228.0L482.8 228.7L484.0 229.7L485.9 229.3L487.7 228.7L486.2 228.5L485.9 227.6L487.7 227.0L489.8 226.5L491.0 226.3L489.8 227.2L489.3 227.8L489.6 228.7L488.3 229.3L490.2 229.9L491.8 230.9L493.0 232.1L494.0 233.2L493.2 233.9L491.4 233.9L489.6 234.1L488.1 233.6L486.2 232.8L484.6 232.9L482.8 233.0L481.2 233.9L479.8 233.7L478.5 233.9ZM249.5 381.8L255 382.3L260.5 383.6L256 385.8L249.5 386.8Z" fill="#fff" stroke="#2ea42e" stroke-width="1" shape-rendering="crispEdges"/>
<path d="M294 197.5L300 197L308 197.8L318 197.6M302 193.8L312 193.2L322 193.6M320 195.5L326 197L333 199M333 191.5L340 191.2L346 192M326 190L332 189.5M304 191L310 190.5M336 195.5L342 196.5" fill="none" stroke="#fff" stroke-width="1" shape-rendering="crispEdges"/>
<path d="M310.6 196.2L314.1 195.3L316.2 195.6M334.7 196.4L336.6 196.6L339.7 196.3L342.6 195.3L344.2 194.6M342.7 193.3L345.3 194.3L347.3 193.8M302.7 190.8L304.9 191.9L306.7 191.7M348.3 186.6L350.8 187.8L352.5 187.9L354.4 188.3M317.8 191.4L320.8 191.3L324.4 192.4L327.1 192.8M337.6 194.8L341.0 194.0L343.1 193.7M356.6 184.9L359.1 184.4L361.0 184.2L361.8 184.4M336.0 189.3L337.9 189.4L340.9 189.0M321.8 194.6L323.4 193.5L325.4 192.7L327.8 191.6M320.5 198.2L323.5 198.2L325.3 198.1L329.2 198.1M338.7 185.6L339.4 185.8L341.1 185.3M332.5 195.1L334.6 195.8L338.6 196.7L342.1 197.4L345.4 196.8M330.8 191.5L334.8 192.2L337.4 191.5M337.2 191.3L341.1 192.4L343.6 191.7L345.6 191.0L345.8 191.0M358.7 203.2L362.4 202.8M344.9 187.8L347.5 188.1L349.2 189.2M345.7 194.1L347.6 194.4M355.8 206.0L357.2 205.7L360.0 204.6L363.5 205.1L364.8 205.5M310.6 197.1L313.4 197.9L315.1 198.5L318.8 198.8M303.3 197.9L306.2 197.4L309.0 197.6M350.3 185.5L351.9 184.8L352.9 184.2M308.5 190.3L310.6 189.8M315.1 189.8L315.6 189.8M304.8 193.4L307.3 193.2L309.7 192.2L312.1 191.8L314.7 192.3M321.1 195.4L323.8 194.4L327.8 195.1L331.7 194.1M351.5 185.0L353.2 185.9L355.8 185.5M357.9 206.3L358.7 206.6M322.5 191.3L326.1 190.2L329.2 191.1M325.5 189.3L329.5 189.4L331.6 190.5L333.9 190.2M295.4 192.6L297.4 193.2L299.1 194.0M303.5 197.1L305.1 196.6L307.1 196.8L310.0 197.4M341.0 200.2L343.5 199.8L347.4 198.9L350.7 199.3L352.4 200.1M351.3 200.1L354.4 199.1L356.0 199.4L356.2 199.4M294.4 195.8L297.1 194.6L300.6 195.2M329.7 195.8L332.5 196.4L335.2 197.2L338.8 196.5L342.2 195.9M340.4 194.0L342.1 195.0L344.4 193.9L347.0 193.3M336.8 191.0L340.1 190.5L343.1 189.3L344.7 188.8L347.9 189.2M342.3 190.0L344.5 189.9L345.9 190.4M319.7 194.9L322.1 194.1L326.0 194.6L328.5 195.1M323.4 192.0L327.0 190.8L330.4 191.6M348.2 203.5L349.9 204.3L351.6 205.1M352.4 205.3L354.3 204.8M330.3 187.6L333.8 187.4L335.3 188.0L337.8 188.9M333.5 187.9L335.1 188.4L337.7 189.0M340.0 189.9L343.8 190.0L345.8 189.8" fill="none" stroke="#2ea42e" stroke-width="1" shape-rendering="crispEdges"/>
<path d="M342 380.5L350 380.6L360 381.2M351 383L360 383.2L368 383.6M399 381.8L407 382L415 382.3M357 372.5L362 371.5M361 369L366 367.5" fill="none" stroke="#2ea42e" stroke-width="2.6" shape-rendering="crispEdges"/>
<path d="M342 380.5L350 380.6L360 381.2M351 383L360 383.2L368 383.6M399 381.8L407 382L415 382.3M357 372.5L362 371.5M361 369L366 367.5" fill="none" stroke="#fff" stroke-width="1" shape-rendering="crispEdges"/>
<path d="M378 382.3L383 381.2L390 381L391.5 382.5L385 383.3Z" fill="#6acd6a" stroke="#2ea42e" stroke-width="1" shape-rendering="crispEdges"/>
<rect x="223" y="184" width="26" height="203" fill="#7d0000"/>
</svg>
<!-- /MAP -->
<!-- toolbar icons -->
<svg class="a" style="left:0;top:0" width="677" height="86">
<defs>
<linearGradient id="lens" x1="0" y1="0" x2="1" y2="1"><stop offset="0" stop-color="#e8ecff"/><stop offset="0.4" stop-color="#a4aefc"/><stop offset="1" stop-color="#c8cff8"/></linearGradient>
<linearGradient id="fold" x1="0" y1="0" x2="0" y2="1"><stop offset="0" stop-color="#fbe7b0"/><stop offset="1" stop-color="#eac679"/></linearGradient>
<radialGradient id="globe" cx="0.35" cy="0.3" r="0.85"><stop offset="0" stop-color="#6aaef0"/><stop offset="0.5" stop-color="#2a6cc8"/><stop offset="1" stop-color="#0a2470"/></radialGradient>
<linearGradient id="blarr" x1="0" y1="0" x2="0" y2="1"><stop offset="0" stop-color="#9ad2ff"/><stop offset="0.5" stop-color="#42a4f2"/><stop offset="1" stop-color="#2c88dc"/></linearGradient>
<linearGradient id="info" x1="0" y1="0" x2="1" y2="1"><stop offset="0" stop-color="#9cbde4"/><stop offset="0.5" stop-color="#6d9bd0"/><stop offset="0.52" stop-color="#8fb4e0"/><stop offset="0.6" stop-color="#5f8cbc"/><stop offset="1" stop-color="#5b87b5"/></linearGradient>
<linearGradient id="press" x1="0" y1="0" x2="0" y2="1"><stop offset="0" stop-color="#d8d8d8"/><stop offset="1" stop-color="#eeeeee"/></linearGradient>
</defs>
<!-- grip -->
<g fill="#9a9a9a"><rect x="5" y="55" width="1" height="1"/><rect x="4" y="56" width="2" height="1"/><rect x="5" y="59" width="1" height="1"/><rect x="4" y="60" width="2" height="1"/><rect x="5" y="63" width="1" height="1"/><rect x="4" y="64" width="2" height="1"/><rect x="5" y="67" width="1" height="1"/><rect x="4" y="68" width="2" height="1"/><rect x="5" y="71" width="1" height="1"/><rect x="4" y="72" width="2" height="1"/><rect x="5" y="75" width="1" height="1"/><rect x="4" y="76" width="2" height="1"/><rect x="5" y="79" width="1" height="1"/><rect x="4" y="80" width="2" height="1"/><rect x="4" y="82" width="2" height="1"/></g>
<!-- 1 doc -->
<path d="M16.5 58.5H27.5L31.5 62.5V77.5H16.5Z" fill="#fff" stroke="#a6a6a6"/>
<path d="M27.5 58.5V62.5H31.5" fill="none" stroke="#bdbdbd"/>
<ellipse cx="21.5" cy="68" rx="3.2" ry="2.2" fill="none" stroke="#1c4f7c" stroke-width="1.8"/>
<path d="M28 65V69.5Q28 71.5 25 71" fill="none" stroke="#1c4f7c" stroke-width="1.8"/>
<path d="M19 72.5L23 71.5L26 71L29 72L27 73.5L25 74L25.5 76L23.5 74L21 73.5Z" fill="#e8962e"/>
<!-- 2 folder -->
<path d="M40.5 61.5H49.5L50.5 59.5H57.5L58.5 61.5H59.5V76.5H40.5Z" fill="#f1d28c" stroke="#d8a24c"/>
<rect x="50" y="60.5" width="6" height="1.3" fill="#fff"/><rect x="54.5" y="60.5" width="2" height="1.3" fill="#1fa2f0"/>
<path d="M44 66.5H62.5L60.5 76.5H40.5Z" fill="url(#fold)" stroke="#d9a24e"/>
<!-- 3 floppies -->
<g fill="#a9a9a9" stroke="#8d8d8d">
<path d="M68.5 58.5H80L83.5 62V73.5H68.5Z"/>
<path d="M70.5 60.5H82L85.5 64V75.5H70.5Z"/>
<path d="M72.5 62.5H84.5L88.5 66.5V77.5H72.5Z"/>
</g>
<rect x="75.5" y="63.5" width="8" height="4" fill="#b4b4b4" stroke="#959595"/>
<rect x="77" y="64" width="1.2" height="3" fill="#808080"/>
<rect x="75.5" y="72.5" width="10" height="4" fill="#b8b8b8" stroke="#959595"/>
<!-- 4 magnifier -->
<path d="M110.5 69.5L117.5 76.5" stroke="#000" stroke-width="3.6" stroke-linecap="round"/>
<path d="M110.5 69.5L117.2 76.2" stroke="#e6c93a" stroke-width="1.6"/>
<circle cx="106" cy="65" r="5.6" fill="url(#lens)" stroke="#000" stroke-width="2.2"/>
<!-- 5 hand -->
<path d="M131.2 77.5L131 75L127.2 71.6L124.6 68L126.5 66.5L128.5 66.3L130 68.5L127.5 61.5L129 60.5L131 61.2L131.2 60L133.5 58.6L135 59.2L135.5 61L136.8 60L138.5 60.5L139.2 64L141 62.6L143 63.5L143 68L140.5 73L139.5 77.5Z" fill="#fbfbfb"/>
<path d="M124.6 68L126.5 66.5L128.5 66.3L130 68.5M124.6 68L127.2 71.6L131 75L131.2 77.5M130 68.5L127.5 61.5L129 60.5L131 61.2L132.5 65M131.5 63.5L131.2 60L133.5 58.6L135 59.2L135.8 64.5M135.5 61L136.8 60L138.5 60.5L139.3 66M139.2 64L141 62.6L143 63.5L143 68L140.5 73L139.5 77.5" fill="none" stroke="#000" stroke-width="1.2" stroke-linejoin="round" stroke-linecap="round"/>
<!-- 6 zoom pan -->
<path d="M156.4 71.6L158.5 74.5L160.5 77.4M159.5 68.2L162.6 71.6M161 68.5L163.2 64.2L164.6 63.6L165.2 68.3M165.4 65L166.6 62.6L168.2 63.2L168.3 69.5" fill="none" stroke="#000" stroke-width="1.2" stroke-linejoin="round" stroke-linecap="round"/>
<circle cx="154.7" cy="64.2" r="4.9" fill="url(#lens)" stroke="#000" stroke-width="2"/>
<!-- 7 globe -->
<circle cx="190" cy="67.8" r="10" fill="url(#globe)"/>
<path d="M186 60.3L190 59.3L192.5 60.8L189.5 62.8L186.8 62.2Z" fill="#dfe8f2" opacity="0.9"/>
<path d="M181.3 63.5L184.5 61.8L187 63.3L189.3 64.6L187.6 67L185 67.6L182.2 66.2Z" fill="#cfdcec" opacity="0.85"/>
<path d="M183 68.6L186.5 69.2L188.2 71.2L187.2 74.6L185.6 76.2L184.5 73.2L183.3 71Z" fill="#e6e9ee"/>
<path d="M192.7 60.6L196.2 60.8L197.8 63L195.6 64.4L193.2 63.6Z" fill="#e8ecf0" opacity="0.9"/>
<path d="M191.2 65.2L196 64.8L199.4 66.6L199 70.2L197.2 73.5L195.6 74.2L194.6 70.6L192.2 68.6Z" fill="#eceef0"/>
<!-- 8 zoom box gray -->
<path d="M205.5 71.5V58.5H218.5" fill="none" stroke="#8f8f8f" stroke-width="1.2"/>
<path d="M216 70L223.5 77.5" stroke="#8c8c8c" stroke-width="3.8" stroke-linecap="square"/>
<circle cx="211.8" cy="65" r="5.2" fill="#e6e6e6" stroke="#8f8f8f" stroke-width="2.6"/>
<rect x="210.5" y="63.5" width="3" height="3" fill="#9c9c9c"/>
<!-- 9 zoom +/- -->
<path d="M241 69L248 76" stroke="#000" stroke-width="3.6" stroke-linecap="round"/>
<path d="M241 69L247.7 75.7" stroke="#e6c93a" stroke-width="1.6"/>
<circle cx="236.9" cy="64.6" r="5.6" fill="url(#lens)" stroke="#000" stroke-width="2.2"/>
<path d="M244 59.5H249M230 74.5H235M232.5 72V77" stroke="#000" stroke-width="1.1"/>
<!-- 10 gray crosshair zoom -->
<path d="M266.5 70.5L274 77.5" stroke="#8c8c8c" stroke-width="3.8" stroke-linecap="square"/>
<path d="M258.3 59.4L265.7 59.4L268.6 62.3L268.6 67.5L265.7 70.4L258.3 70.4L255.4 67.5L255.4 62.3Z" fill="#a8a8a8" stroke="#8e8e8e" stroke-width="2.4"/>
<path d="M261 64.5H275.5M261 64.5V77.5" stroke="#8a8a8a" stroke-width="1.2"/>
<!-- 11 blue arrow left -->
<path d="M281 67.4L287.2 61.6V64.3H299V70.6H287.2V73.4Z" fill="url(#blarr)" stroke="#000" stroke-width="1.5" stroke-linejoin="miter"/>
<!-- 12 gray arrow right -->
<path d="M324.5 67.8L318 61V63.8H305.5V71.8H318V74.8Z" fill="#9e9e9e" stroke="#8c8c8c" stroke-width="1.4"/>
<!-- 13 palette -->
<path d="M334 59.5Q340 57.5 345 60Q348.5 63 348 69Q347.5 76.5 343 77Q339 77 336 73Q333 70 332.3 66Q331 61 334 59.5Z" fill="#efdc9c" stroke="#000" stroke-width="1.6"/>
<path d="M335 61Q340 59.5 344 61.5Q346.5 64 346 69Q345.5 75 342.5 75.3Q339.5 75 337 72" fill="none" stroke="#d6a82a" stroke-width="1"/>
<circle cx="336.5" cy="65" r="2.4" fill="#b01818"/><circle cx="342.5" cy="65" r="2.4" fill="#1848c0"/><circle cx="342.6" cy="71" r="2.6" fill="#18901e"/>
<!-- 14 table -->
<rect x="356.5" y="59.8" width="17" height="16" fill="#fff" stroke="#000" stroke-width="1.6"/>
<rect x="357.5" y="65" width="15.2" height="5" fill="#2b9bea"/>
<path d="M362.2 60V76M367.3 60V76M357 65H373M357 70H373" stroke="#1b1b1b" stroke-width="0.9"/>
<!-- 15 pressed select -->
<rect x="384.5" y="57.5" width="24" height="22" rx="3" fill="url(#press)" stroke="#6e6e6e"/>
<path d="M391.3 60.2V72.8L394.3 70.3L396.8 75.5L399.2 74.4L396.8 69.3H401Z" fill="#fff" stroke="#000" stroke-width="1.5" stroke-linejoin="round"/>
<!-- 16 gray X -->
<path d="M412.1 61.5L415.3 59.1H419.5L422.8 62.5L426.2 59.1H429.8V61.1L425.8 64.4L429.1 71.8L429.8 74.2H426.2L425.8 76.6H421.5L421.2 71.3L417.9 74.7V76.6H415V64.2L412.1 63Z" fill="#8e8e8e"/>
<path d="M418 61.5L420 63.5M418.5 66V68M422 70L424 75" stroke="#b0b0b0" stroke-width="1"/>
<!-- 17 yellow box -->
<path d="M445.8 60.3L454.3 64.2V73L446.2 76.7L437.8 72.8V63.8Z" fill="#c8b01e" stroke="#000" stroke-width="1.5" stroke-linejoin="round"/>
<path d="M446 60.5V76.5M438.5 64.5L443 66.5M453.5 64.5L449 66.5" stroke="#000" stroke-width="1.3"/>
<path d="M439 64.8L445.5 61.5V65.5Z" fill="#a08a10"/>
<!-- 18 info -->
<circle cx="470.9" cy="67.9" r="9.5" fill="#fff" stroke="#86abdc" stroke-width="1.2"/>
<circle cx="470.9" cy="67.9" r="7.6" fill="url(#info)"/>
<circle cx="471" cy="63" r="1.4" fill="#fff"/>
<path d="M469 65.5H472.2V71.5H473.5V72.6H468.5V71.5H469.8V66.6H469Z" fill="#fff"/>
<!-- 19 edit -->
<rect x="494" y="62" width="15" height="13" rx="1" fill="#fff" stroke="#000" stroke-width="1.6"/>
<rect x="495" y="63" width="13" height="1.6" fill="#a8a6e8"/>
<path d="M496 72.5L507.5 60" stroke="#000" stroke-width="3.8" stroke-linecap="round"/>
<path d="M496.3 72.2L507.3 60.3" stroke="#2f86e8" stroke-width="2"/>
<path d="M494.5 74.5L497 71.5L498 72.8Z" fill="#e8d23c"/>
<!-- 20 ruler -->
<rect x="523.8" y="62.8" width="18.4" height="8" rx="1.5" fill="#e6d838" stroke="#000" stroke-width="1.6"/>
<path d="M526.5 63V66M529.5 63V65M532.5 63V66M535.5 63V65M538.5 63V66" stroke="#000" stroke-width="1"/>
<path d="M549 66.2H554.2L551.6 69.5Z" fill="#4a5470"/>
<!-- 21 undo -->
<path d="M564.2 67.8L570 61.3H573L573.8 63.2H579.6L583.8 67.4V75.5H576.5V72H573V74.7H569.6Z" fill="#999" stroke="#8a8a8a" stroke-width="1"/>
<path d="M609 67.8L603.2 61.3H600.2L599.4 63.2H593.6L589.4 67.4V75.5H596.7V72H600.2V74.7H603.6Z" fill="#999" stroke="#8a8a8a" stroke-width="1"/>
<!-- 23 window -->
<rect x="621.8" y="61" width="15.4" height="13" rx="1.5" fill="#fff" stroke="#000" stroke-width="1.6"/>
<rect x="622.6" y="62" width="13.8" height="1.5" fill="#8c90ee"/>
<!-- slider -->
<path d="M654 66.5H677" stroke="#9a9a9a" stroke-width="1"/>
<rect x="654" y="66" width="1" height="2" fill="#7a7a7a"/>
</svg>
<!-- title kangaroo -->
<svg class="a" style="left:0;top:0" width="30" height="26">
<path d="M4 5H8L11.5 9.5L13 6L15 7L19.5 11.5L16 12.5L12 14L9.5 16L8 19.5L5 21L7 17.5L5 15Z" fill="#e89530"/>
<text x="11" y="20" font-family="Liberation Sans" font-size="6.5" font-weight="bold" fill="#23506e">OJ</text>
</svg>
<!-- frame kangaroo -->
<svg class="a" style="left:0;top:86px" width="30" height="30">
<path d="M7.5 13.5V15.6H12.5" fill="none" stroke="#f0b468" stroke-width="1.1"/>
<path d="M12 13.5Q12.5 11.2 15 11Q18 10.6 20 11.5Q22.5 11.3 24 13Q23.5 15.5 21 16Q19.5 16.3 19 16.8L18.6 18.8L17.6 18.2L17.3 16.4Q15 16.2 13.5 15.2Z" fill="#ec9a3a"/>
<rect x="17.7" y="19.1" width="4.3" height="1.7" fill="#f2b66a"/>
</svg>

<!-- frame buttons -->
<svg class="a" style="left:560px;top:88px" width="117" height="28">
<defs>
<linearGradient id="bb" x1="0" y1="0" x2="0" y2="1"><stop offset="0" stop-color="#c8dbf0"/><stop offset="0.45" stop-color="#bcd1ea"/><stop offset="0.47" stop-color="#9fb9d7"/><stop offset="1" stop-color="#bcd0e8"/></linearGradient>
<linearGradient id="rb" x1="0" y1="0" x2="0" y2="1"><stop offset="0" stop-color="#eca79c"/><stop offset="0.45" stop-color="#e08d80"/><stop offset="0.47" stop-color="#c44a32"/><stop offset="1" stop-color="#d4705e"/></linearGradient>
</defs>
<rect x="4.5" y="3.5" width="35" height="21" rx="3" fill="url(#bb)" stroke="#6b7b92"/>
<rect x="5.5" y="4.5" width="33" height="19" rx="2" fill="none" stroke="#e4edf8" stroke-opacity="0.8"/>
<rect x="16.5" y="14.5" width="12" height="5" rx="1" fill="#fff" stroke="#3a3a4a"/>
<rect x="42.5" y="3.5" width="35" height="21" rx="3" fill="url(#bb)" stroke="#6b7b92"/>
<rect x="43.5" y="4.5" width="33" height="19" rx="2" fill="none" stroke="#e4edf8" stroke-opacity="0.8"/>
<rect x="54.5" y="8.5" width="12" height="11" rx="1.5" fill="#f4f4f4" stroke="#3a3a4a"/>
<rect x="57.5" y="11.5" width="6" height="4" fill="#a9c2e0" stroke="#3a3a4a"/>
<rect x="80.5" y="3.5" width="35.5" height="21" rx="3" fill="url(#rb)" stroke="#5a1a22"/>
<rect x="81.5" y="4.5" width="33.5" height="19" rx="2" fill="none" stroke="#f4c8c0" stroke-opacity="0.6"/>
<path d="M94.5 10.3L102.7 17.3M102.7 10.3L94.5 17.3" fill="none" stroke="#3c3440" stroke-width="5" stroke-linecap="square"/>
<path d="M94.5 10.3L102.7 17.3M102.7 10.3L94.5 17.3" fill="none" stroke="#fff" stroke-width="3.2" stroke-linecap="square"/>
</svg>
<!-- tree icons -->
<svg class="a" style="left:0;top:110px" width="100" height="85">
<defs><linearGradient id="fd" x1="0" y1="0" x2="0" y2="1"><stop offset="0" stop-color="#fbe8ac"/><stop offset="1" stop-color="#ecc878"/></linearGradient></defs>
<rect x="32.5" y="8.5" width="11.5" height="14.5" rx="1.5" fill="url(#fd)" stroke="#d6a04e"/>
<rect x="37" y="11" width="2" height="11" fill="#e4cd96"/>
<path d="M32.5 8.5L37.5 10.5V23.5L32.5 21.5Z" fill="#f8e2a0" stroke="#d8a04a"/>
<rect x="42" y="14" width="1.6" height="5" fill="#fff"/><rect x="42" y="17" width="1.6" height="2.5" fill="#1a9ef0"/>
<rect x="32.5" y="63.5" width="11.5" height="14.5" rx="1.5" fill="url(#fd)" stroke="#d6a04e"/>
<path d="M41 70V78" stroke="#d8a860"/>
<rect x="42" y="69" width="1.6" height="5" fill="#fff"/><rect x="42" y="72" width="1.6" height="2.5" fill="#1a9ef0"/>
</svg>
<!-- tree -->
<div class="a" style="left:14px;top:121px;width:11px;height:11px;border:1px solid #8e8e8e;border-radius:2px;background:linear-gradient(#fff 45%,#e2e2e2 55%,#e8e8e8)"></div>
<div class="a" style="left:16px;top:126px;width:7px;height:1px;background:#3c4f9c"></div>
<svg class="a" style="left:0;top:0" width="210" height="200" shape-rendering="crispEdges">
<g fill="#8c8c8c">
<rect x="25" y="126" width="1" height="1"/><rect x="27" y="126" width="1" height="1"/><rect x="29" y="126" width="1" height="1"/>
</g>
<path d="M19.5 132V182M19 181.5H31M38.5 134V164M38 144.5H49M38 163.5H49" stroke="#8c8c8c" stroke-width="1" stroke-dasharray="1 1" fill="none"/>
</svg>
<div class="a" style="left:49px;top:135px;width:105px;height:19px;background:#3399ff"></div>
<div class="a" style="left:51px;top:138px;width:13px;height:13px;background:#d86a60;border:1px solid #b9574e"></div>
<div class="a" style="left:51px;top:157px;width:13px;height:13px;background:#66cc66;border:1px solid #2fa32f"></div>
<div class="a cb" style="left:66px;top:136px"></div>
<div class="a cb" style="left:66px;top:155px"></div>
<span class="a" style="left:50px;top:119px;font-size:13px;font-weight:bold;line-height:15px;color:#000;letter-spacing:0.6px">Progetto</span>
<span class="a" style="left:50px;top:173px;font-size:13px;font-weight:bold;line-height:15px;color:#000">Sistema</span>
<span class="a" style="left:87px;top:137px;font-size:13px;line-height:15px;color:#fff;letter-spacing:-0.2px">crazygrid02</span>
<span class="a" style="left:87px;top:156px;font-size:13px;line-height:15px;color:#000;letter-spacing:-0.15px">ne_10m_land</span>
<svg class="a" style="left:0;top:110px" width="100" height="85">
<path d="M69.5 34L72 38.5L78.5 29.5" fill="none" stroke="#3c55a0" stroke-width="2.2" stroke-linejoin="round"/>
<path d="M69.5 53L72 57.5L78.5 48.5" fill="none" stroke="#3c55a0" stroke-width="2.2" stroke-linejoin="round"/>
</svg>
</body></html>
